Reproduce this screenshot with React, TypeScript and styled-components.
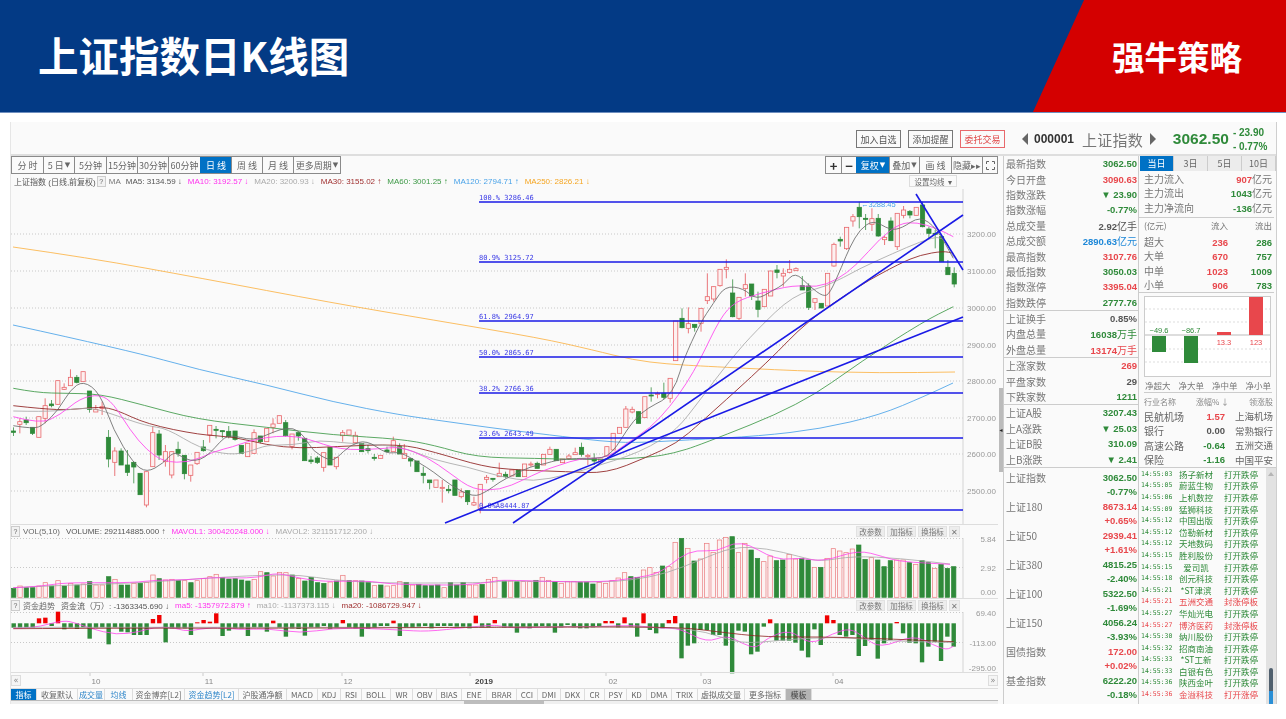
import React from 'react';
import styled, { createGlobalStyle } from 'styled-components';

const GREEN = '#2f8a3a';
const RED = '#e8474c';
const BLUE = '#0071c5';
const CJK = '"Noto Sans CJK SC", "Liberation Sans", sans-serif';
const LATIN = '"Liberation Sans", "Noto Sans CJK SC", sans-serif';

type Pt = [number, number];
// [isRed, bodyTop, bodyBottom, wickTop, wickBottom], in 3x crop units
type Candle = [number, number, number, number, number];

const candlesA: Candle[] = [
  [0,243,247,232,258],[1,215,223,205,250],[0,210,218,200,225],[0,232,250,232,255],[1,200,262,200,262],
  [1,167,205,145,220],[0,162,167,150,172],[1,92,163,92,165],[1,112,118,100,120],[1,82,107,58,107],
  [0,82,97,75,100],[1,65,95,65,95],[0,123,178,123,188],[1,178,186,165,186],[1,170,175,155,195],
  [0,262,327,240,352],[1,303,337,292,378],[0,303,345,295,345],[0,345,367,300,378],[0,337,351,335,400],
  [0,370,434,370,434],[1,365,465,365,472],[1,248,350,228,350],[0,252,315,240,330],[1,305,335,285,350],
  [1,305,375,305,385],[0,298,310,275,320],[0,316,371,316,388],[1,345,376,345,395],[1,307,341,307,345],
  [0,291,302,270,305],[1,226,255,226,278],[0,238,240,228,265],[0,242,244,242,265],[0,244,260,228,265],
  [0,243,268,243,272],[0,286,310,286,310],[1,280,320,280,320],[1,248,310,238,312],[0,258,275,258,280],
  [1,235,275,235,275],[1,222,232,205,250],[1,197,220,197,220],[0,218,257,210,260],[1,252,289,252,298],
  [0,248,258,248,272],[0,265,332,265,332],[0,330,335,318,342],[0,324,337,318,342],[1,308,352,308,365],
  [0,292,345,292,345],[1,322,350,322,358],[1,248,257,240,275],[1,240,255,240,255],[1,256,278,245,278],
  [0,280,305,280,305],[0,296,302,285,310],[0,322,325,312,332],[1,316,325,316,325],[0,300,305,290,308],
  [1,272,305,260,305],[0,290,312,280,312],
];
const candlesB: Candle[] = [
  [1,310,325,282,325],[0,326,333,326,350],[0,333,365,333,365],[0,370,376,350,400],[0,390,398,390,418],
  [1,390,412,390,412],[1,412,414,390,458],[0,418,422,405,430],[0,390,436,390,436],[1,426,440,415,445],
  [0,422,455,422,465],[1,458,465,440,468],[1,403,475,403,490],[1,382,388,375,400],[0,385,388,385,395],
  [1,370,380,338,380],[0,373,380,365,385],[1,360,378,360,378],[0,360,380,360,380],[1,342,380,342,380],
  [1,342,345,335,350],[0,340,355,335,355],[1,313,345,313,345],[1,298,313,290,313],[0,298,332,298,332],
  [1,327,338,327,338],[1,318,326,312,330],[1,308,314,293,314],[0,292,313,278,320],[1,316,320,312,345],
  [0,325,333,310,345],[1,327,333,327,333],[1,290,318,290,318],[1,250,300,250,300],[1,232,250,232,250],
  [1,177,232,168,232],[1,178,186,170,190],[0,185,220,185,220],[1,140,203,140,203],[0,135,137,112,155],
  [1,130,132,125,145],[0,130,142,98,148],[1,85,145,85,158],
];
const candlesC: Candle[] = [
  [1,393,512,393,512],[0,385,413,355,415],[1,401,415,352,430],[0,403,412,403,425],[1,355,400,355,425],
  [1,320,332,250,342],[1,290,327,290,335],[1,238,287,238,290],[1,232,238,208,265],[0,309,380,268,382],
  [1,322,385,322,390],[1,284,296,250,320],[0,282,318,282,330],[0,333,358,305,382],[1,298,350,298,350],
  [1,243,318,243,318],[0,240,247,225,265],[1,250,258,235,290],[1,238,247,210,250],[1,236,242,232,242],
  [0,287,300,258,300],[0,288,352,280,360],[1,326,337,326,360],[0,340,354,340,354],[1,250,348,250,348],
  [1,163,228,158,230],[0,148,153,140,170],[1,112,176,112,180],[1,80,93,72,110],[0,52,80,35,115],
  [0,85,87,72,120],[1,86,103,55,123],[0,85,138,72,140],[1,142,149,138,165],[0,93,152,82,152],
  [1,70,170,70,180],[1,60,76,48,85],[0,64,75,60,85],[1,52,76,52,76],[0,45,110,35,112],
  [0,117,130,110,145],[0,130,132,120,175],[0,140,215,140,215],[0,232,254,210,254],[0,250,282,232,292],
];

const z = (list: number[][], ox: number, oy: number): Pt[] => list.map(([x, y]) => [ox + x / 3, oy + y / 3]);

const smooth = (p: Pt[]) => {
  let d = `M${p[0][0].toFixed(1)} ${p[0][1].toFixed(1)}`;
  for (let i = 1; i < p.length - 1; i++) {
    const mx = (p[i][0] + p[i + 1][0]) / 2;
    const my = (p[i][1] + p[i + 1][1]) / 2;
    d += ` Q${p[i][0].toFixed(1)} ${p[i][1].toFixed(1)} ${mx.toFixed(1)} ${my.toFixed(1)}`;
  }
  const l = p[p.length - 1];
  return `${d} L${l[0].toFixed(1)} ${l[1].toFixed(1)}`;
};

const maLines: { color: string; pts: Pt[] }[] = [
  { color: '#fbb347', pts: [[13,247],[90,258],[200,278],[333,303],[433,320],[540,338],[593,350],[633,360],[667,364],[700,366],[800,371],[880,373],[955,372]] },
  { color: '#4aa3e8', pts: [[13,325],[127,350],[200,370],[267,385],[333,402],[400,415],[450,422],[500,429],[567,437],[600,441],[633,443],[687,440],[760,436],[820,429],[880,415],[925,396],[953,383]] },
  { color: '#3f9a48', pts: [
    ...z([[40,115],[110,128],[200,130],[300,132],[430,165],[590,208],[800,232],[1000,255],[1200,267]], 0, 350),
    ...z([[100,285],[230,322],[400,325],[600,330],[750,322],[820,310],[900,285]], 400, 350),
    ...z([[420,645],[610,510],[790,395],[880,350]], 660, 190),
  ] },
  { color: '#8f2020', pts: [
    ...z([[40,167],[130,177],[210,180],[300,170],[350,180],[440,222],[600,255],[700,260],[800,285],[900,295],[1000,290],[1200,282]], 0, 350),
    ...z([[100,305],[250,350],[350,360],[500,365],[620,370],[740,322],[830,280],[900,220]], 400, 350),
    ...z([[330,510],[440,395],[600,285],[720,220],[780,195],[850,183],[880,190]], 660, 190),
  ] },
  { color: '#a9a9a9', pts: [
    ...z([[40,183],[130,185],[200,180],[270,172],[330,190],[440,228],[500,235],[600,295],[690,315],[750,305],[800,285],[880,285],[960,270],[1040,280],[1200,287]], 0, 350),
    ...z([[100,330],[200,350],[300,380],[400,395],[500,375],[600,345],[680,320],[750,290],[830,240],[900,150]], 400, 350),
    ...z([[210,510],[290,420],[400,315],[500,290],[600,235],[700,190],[780,155],[850,135],[880,200]], 660, 190),
  ] },
  { color: '#ff44ee', pts: [
    ...z([[40,200],[120,222],[180,195],[240,145],[300,133],[340,160],[390,240],[440,300],[490,335],[570,338],[640,305],[700,290],[740,275],[800,262],[860,257],[920,265],[1020,300],[1140,297],[1200,290]], 0, 350),
    ...z([[80,320],[150,370],[220,420],[300,420],[370,390],[420,365],[480,345],[540,325],[620,325],[680,280],[750,235],[810,170],[860,100]], 400, 350),
    ...z([[120,510],[180,385],[225,335],[300,310],[400,285],[470,292],[530,270],[590,225],[660,145],[720,100],[770,97],[830,115],[880,140]], 660, 190),
  ] },
  { color: '#6a6a6a', pts: [
    ...z([[40,227],[100,237],[130,225],[175,180],[210,120],[250,92],[300,130],[340,240],[400,340],[440,368],[490,340],[520,305],[545,320],[570,332],[600,330],[630,310],[660,275],[685,255],[720,262],[760,270],[800,255],[840,238],[880,233],[910,255],[940,305],[990,332],[1010,325],[1050,285],[1100,270],[1160,312]], 0, 350),
    ...z([[0,305],[60,340],[100,365],[150,405],[220,442],[260,425],[300,395],[340,375],[390,350],[440,340],[470,330],[530,325],[590,325],[620,320],[650,290],[680,240],[720,190],[770,160],[800,145],[830,100]], 400, 350),
    ...z([[70,510],[120,400],[160,340],[195,288],[250,295],[290,330],[340,300],[370,285],[405,245],[450,290],[490,320],[510,310],[545,230],[570,170],[600,118],[640,90],[690,120],[725,115],[780,78],[830,115],[880,205]], 660, 190),
  ] },
];

const fibs: [number, string][] = [
  [202, '100.% 3286.46'], [262, '80.9% 3125.72'], [321, '61.8% 2964.97'], [357, '50.0% 2865.67'],
  [393, '38.2% 2766.36'], [438, '23.6% 2643.49'], [510, '0.0%A8444.87'],
];
const trends: [number, number, number, number][] = [[445, 523, 963, 317], [513, 523, 963, 215], [916, 194, 963, 270]];
const priceTicks: [number, string][] = [
  [234, '3200.00'], [271, '3100.00'], [308, '3000.00'], [345, '2900.00'],
  [381, '2800.00'], [418, '2700.00'], [454, '2600.00'], [491, '2500.00'],
];

// [isRed, top] in 3x crop units of the lower panels
const volA: [number, number][] = [
  [0,205],[1,198],[0,203],[0,203],[1,198],[1,188],[0,198],[1,182],[0,198],[1,190],[0,195],[1,192],[0,185],[1,195],[1,195],
  [0,170],[1,178],[0,195],[0,195],[1,190],[0,190],[1,187],[1,165],[0,176],[1,180],[1,178],[0,181],[1,182],[0,188],[1,182],
  [1,175],[1,170],[1,163],[0,173],[0,177],[0,176],[0,180],[0,183],[1,178],[1,155],[0,158],[1,168],[1,157],[1,158],[0,165],
  [1,175],[0,183],[0,172],[0,188],[0,190],[1,186],[0,183],[1,166],[0,182],[1,182],[0,183],[0,186],[1,197],[0,195],[1,198],
  [1,197],[1,185],[0,187],[1,195],[0,193],[0,197],[0,197],[0,195],[1,203],[0,188],[0,195],[0,187],[1,195],[1,195],[0,193],
  [1,178],[1,172],
];
const volB: [number, number][] = [
  [0,183],[1,183],[0,185],[1,185],[1,185],[0,181],[1,172],[1,181],[0,185],[1,190],[1,184],[1,184],[0,186],[0,186],[0,192],
  [1,187],[1,190],[1,182],[1,174],[1,158],[0,170],[0,172],[1,150],[1,143],[1,157],[0,138],[1,140],[1,67],[0,55],[1,85],
  [0,123],[1,117],[1,70],[1,97],[1,60],[1,52],[0,50],[1,98],[1,70],[0,90],[0,115],[1,125],[1,108],[0,122],[0,120],
  [1,103],[1,117],[0,115],[0,120],[1,142],[0,142],[1,115],[1,86],[1,93],[1,98],[1,87],[0,75],[0,118],[1,113],[0,120],
  [0,140],[0,122],[1,120],[1,120],[0,128],[1,133],[0,122],[0,128],[1,145],[0,133],[0,145],[0,140],
];
const flowA = [323,323,323,323,295,293,318,275,328,323,327,322,356,323,322,373,322,335,337,345,345,345,297,285,367,325,325,325,345,307,300,305,280,348,332,325,325,348,322,322,335,302,323,350,325,327,347,322,323,318,326,323,300,322,325,350,327,323,318,318,302,348,323,323,320,318,325,318,318,318,320,320,325,287,322,322,300];
const flowB = [323,322,338,322,325,320,318,322,338,322,315,322,325,325,322,318,303,303,322,292,320,350,280,330,340,325,300,288,415,377,370,330,330,345,345,377,460,332,335,403,395,320,298,362,362,362,368,392,412,328,375,286,300,345,350,345,408,378,360,416,370,360,306,340,368,370,427,380,365,423,350,380];

const STEP = 6.33;
const barXA = (i: number) => 13.7 + STEP * i;
const barXB = (i: number, n: number) => 953.7 - STEP * (n - 1 - i);

const volLines = [
  { color: '#a8a8a8', pts: [...z([[40,203],[200,195],[400,190],[640,173],[800,165],[900,165],[1000,180],[1150,190],[1480,188]], 0, 520), ...z([[0,182],[300,187],[400,180],[500,160],[600,120],[700,80],[800,85],[900,110],[960,125],[1060,108],[1200,115],[1350,132]], 500, 520)] },
  { color: '#ff44ee', pts: [...z([[40,203],[110,200],[180,190],[240,188],[400,188],[470,180],[560,180],[640,172],[700,175],[780,172],[830,158],[900,175],[970,185],[1100,182],[1170,192],[1280,195],[1400,195],[1480,185]], 0, 520), ...z([[0,180],[100,183],[300,187],[400,175],[480,160],[540,110],[590,90],[650,95],[700,68],[750,75],[800,105],[850,120],[900,113],[970,125],[1075,90],[1150,110],[1200,125],[1350,133]], 500, 520)] },
];
const flowLines = [
  { color: '#ff44ee', pts: [...z([[40,325],[100,325],[190,300],[230,310],[270,325],[350,345],[420,335],[460,322],[520,322],[560,335],[640,320],[720,330],[800,325],[900,340],[1000,325],[1100,325],[1200,330],[1280,335],[1400,322],[1480,315]], 0, 520), ...z([[0,318],[50,325],[150,320],[300,320],[400,315],[480,325],[540,325],[620,368],[680,345],[730,372],[770,385],[800,355],[870,328],[930,375],[1000,340],[1050,325],[1090,350],[1140,385],[1240,345],[1300,375],[1340,390],[1361,378]], 500, 520)] },
  { color: '#a8a8a8', pts: [...z([[40,322],[400,322],[800,322],[1480,322]], 0, 520), ...z([[0,320],[500,320],[620,335],[720,372],[850,360],[1000,350],[1150,362],[1361,368]], 500, 520)] },
  { color: '#8f2020', pts: [...z([[40,326],[400,324],[800,325],[1480,322]], 0, 520), ...z([[0,322],[530,320],[650,335],[800,352],[1000,350],[1361,365]], 500, 520)] },
];

const GlobalStyle = createGlobalStyle`
  html, body { margin: 0; padding: 0; background: #fff; }
  * { box-sizing: border-box; }
`;

const Page = styled.div`
  width: 1286px;
  height: 719px;
  overflow: hidden;
  font-family: ${CJK};
`;

const Banner = styled.header`
  height: 113px;
  background: #033a85;
  display: flex;
  align-items: center;
  border-bottom: 1px solid #6f8fbf;
`;

const Title = styled.h1`
  margin: 0 0 0 38px;
  font-size: 40.5px;
  line-height: 1;
  font-weight: 700;
  color: #fff;
  position: relative;
  top: -1px;
`;

const Brand = styled.div`
  margin-left: auto;
  width: 253px;
  height: 100%;
  background: #d40000;
  clip-path: polygon(51px 0, 100% 0, 100% 100%, 0 100%);
  color: #fff;
  font-size: 32.5px;
  font-weight: 700;
  display: flex;
  align-items: center;
  padding: 0 0 2px 79px;
`;

const Win = styled.div`
  margin: 9px 0 0 10px;
  width: 1267px;
  height: 582px;
  background: #fafafa;
  border-left: 1px solid #e6e6e6;
  border-right: 1px solid #cfcfcf;
  filter: blur(0.35px);
`;

const TopBar = styled.div`
  height: 34px;
  border-bottom: 2px solid #dedede;
  display: flex;
  align-items: center;
  padding: 2px 0 0 845px;
`;

const ActionBtn = styled.button<{ $danger?: boolean }>`
  width: 45px;
  height: 18px;
  margin-right: 7px;
  padding: 0;
  background: #fafafa;
  border: 1px solid ${p => (p.$danger ? '#e8696c' : '#777')};
  color: ${p => (p.$danger ? '#e04848' : '#555')};
  font: 9px ${CJK};
`;

const Triangle = styled.span<{ $dir: 'left' | 'right' }>`
  width: 0;
  height: 0;
  flex: none;
  border-style: solid;
  border-color: transparent;
  border-width: 6px 0 6px 0;
  ${p => (p.$dir === 'left' ? 'border-right: 6px solid #666; margin-left: 10px;' : 'border-left: 6px solid #666;')}
`;

const Code = styled.span`
  margin: 0 8px 0 6px;
  font: 700 12px ${LATIN};
  color: #333;
`;

const StockName = styled.span`
  font-size: 15px;
  letter-spacing: 0.2px;
  color: #777;
  margin-right: 7px;
`;

const BigPrice = styled.span`
  margin: 0 4px 0 17px;
  font: 700 15.5px ${LATIN};
  color: ${GREEN};
`;

const Changes = styled.div`
  display: flex;
  flex-direction: column;
  gap: 3px;
  font: 700 10px/11px ${LATIN};
  color: ${GREEN};
`;

const Body = styled.div`
  display: flex;
  height: 548px;
`;

const ChartCol = styled.div`
  position: relative;
  width: 992px;
  flex: none;
  display: flex;
  flex-direction: column;
`;

const ToolRow = styled.div`
  height: 18px;
  padding-right: 5px;
  display: flex;
  justify-content: space-between;
`;

const BtnGroup = styled.div`
  display: flex;
  border: 1px solid #8a8a8a;
`;

const ToolBtn = styled.div<{ $w: number; $on?: boolean; $big?: boolean }>`
  width: ${p => p.$w}px;
  display: flex;
  align-items: center;
  justify-content: center;
  background: ${p => (p.$on ? BLUE : '#fafafa')};
  color: ${p => (p.$on ? '#fff' : p.$big ? '#333' : '#666')};
  border-left: 1px solid ${p => (p.$on ? BLUE : '#8a8a8a')};
  font-size: ${p => (p.$big ? 13 : 9)}px;
  font-weight: ${p => (p.$big ? 700 : 400)};
  white-space: nowrap;
  &:first-child { border-left: 0; }
`;

const Caret = styled.span`
  font: 7px "DejaVu Sans", sans-serif;
  margin-left: 1px;
`;

const Legend = styled.div`
  height: 15px;
  padding: 0 5px 0 3px;
  display: flex;
  align-items: center;
  font: 8px ${LATIN};
  white-space: nowrap;
`;

const LegendItem = styled.span<{ $c: string }>`
  color: ${p => p.$c};
  margin-right: 6px;
`;

const Help = styled.span`
  width: 9px;
  height: 11px;
  margin: 0 3px 0 0;
  border: 1px solid #ccc;
  background: #f2f2f2;
  color: #666;
  font-size: 7px;
  display: inline-flex;
  align-items: center;
  justify-content: center;
  flex: none;
`;

const MaSetting = styled.span`
  position: absolute;
  top: 19px;
  left: 898px;
  width: 48px;
  height: 12px;
  border: 1px solid #ddd;
  background: #fafafa;
  color: #666;
  font-size: 7.5px;
  display: flex;
  align-items: center;
  justify-content: center;
  gap: 3px;
`;

const ChartSvg = styled.svg<{ $h: number }>`
  display: block;
  width: 992px;
  height: ${p => p.$h}px;
  flex: none;
  overflow: visible;
`;

const PanelHead = styled(Legend)`
  height: 14px;
  border-top: 1px solid #ddd;
  margin-right: 5px;
  padding: 0;
`;

const PanelTools = styled.div`
  margin-left: auto;
  display: flex;
  gap: 2px;
  padding-right: 38px;
`;

const PanelTool = styled.span<{ $w?: number }>`
  width: ${p => p.$w || 29}px;
  height: 11px;
  background: #ededed;
  border: 1px solid #e2e2e2;
  color: #777;
  font: 7.5px ${CJK};
  display: flex;
  align-items: center;
  justify-content: center;
`;

const DateAxis = styled.div`
  height: 17px;
  margin-right: 5px;
  border-top: 1px solid #ddd;
  border-bottom: 1px solid #ddd;
  display: flex;
  align-items: center;
  justify-content: space-between;
`;

const Pager = styled.span`
  width: 10px;
  height: 11px;
  border: 1px solid #ddd;
  background: #f5f5f5;
  color: #888;
  font: 8px/9px "DejaVu Sans", sans-serif;
  text-align: center;
`;

const TabBar = styled.div`
  height: 12px;
  margin-right: 5px;
  display: flex;
  border-bottom: 1px solid #bbb;
`;

const BottomTab = styled.span<{ $w: number; $mode?: 'active' | 'link' | 'muted' }>`
  width: ${p => p.$w}px;
  flex: none;
  display: flex;
  align-items: center;
  justify-content: center;
  border-right: 1px solid #ddd;
  background: ${p => (p.$mode === 'active' ? BLUE : p.$mode === 'muted' ? '#b4b4b4' : 'transparent')};
  color: ${p => (p.$mode === 'active' ? '#fff' : p.$mode === 'link' ? '#2f86c9' : p.$mode === 'muted' ? '#444' : '#666')};
  font: 8px ${CJK};
  white-space: nowrap;
`;

const HScroll = styled.div`
  height: 3px;
  margin-right: 5px;
  background: #f0f0f0;
`;

const HThumb = styled.div`
  width: 80px;
  height: 3px;
  margin-left: 453px;
  background: #bdbdbd;
`;

const SideHandle = styled.span`
  position: absolute;
  left: 988px;
  top: 232px;
  width: 4px;
  height: 84px;
  background: #bbb;
  color: #222;
  font: 6px/84px "DejaVu Sans", sans-serif;
  text-align: center;
`;

const StatCol = styled.div`
  width: 136px;
  flex: none;
  border-left: 1px solid #ccc;
  border-right: 1px solid #ccc;
`;

const StatGroup = styled.div`
  border-bottom: 1px solid #ccc;
`;

const StatRow = styled.div<{ $h?: number }>`
  height: ${p => p.$h || 15.4}px;
  padding: 0 1px 0 2px;
  display: flex;
  align-items: center;
  justify-content: space-between;
  white-space: nowrap;
`;

const IndexList = styled.div`
  padding-top: 2px;
`;

const Label = styled.span`
  font-size: 10px;
  color: #777;
`;

const Num = styled.span<{ $c?: string }>`
  font: 700 9.5px ${LATIN};
  color: ${p => p.$c || '#555'};
`;

const Unit = styled.span<{ $c?: string }>`
  font: 400 10px ${CJK};
  color: ${p => p.$c || 'inherit'};
`;

const FlowCol = styled.div`
  flex: 1;
  min-width: 0;
  display: flex;
  flex-direction: column;
`;

const DayTabs = styled.div`
  display: flex;
  height: 15px;
  margin-left: 1px;
  flex: none;
`;

const DayTab = styled.span<{ $on?: boolean }>`
  flex: 1;
  display: flex;
  align-items: center;
  justify-content: center;
  font-size: 9px;
  background: ${p => (p.$on ? BLUE : '#ececec')};
  color: ${p => (p.$on ? '#fff' : '#666')};
  border-right: 1px solid #ccc;
`;

const FlowBlock = styled.div`
  padding: 0 2px 2px 5px;
  border-bottom: 1px solid #ccc;
  margin-right: 2px;
  flex: none;
`;

const FlowRow = styled.div<{ $h?: number }>`
  height: ${p => p.$h || 14.5}px;
  display: flex;
  align-items: center;
  justify-content: space-between;
  white-space: nowrap;
`;

const SmallHead = styled.span<{ $w?: number }>`
  width: ${p => p.$w || 40}px;
  font-size: 8.5px;
  color: #777;
  text-align: right;
  &:first-child { text-align: left; }
`;

const Cell = styled.span<{ $w: number }>`
  width: ${p => p.$w}px;
  text-align: right;
  &:first-child { text-align: left; }
`;

const MiniBox = styled.svg`
  display: block;
  width: 127px;
  height: 81px;
  margin: 3.5px 0 0 5px;
  flex: none;
`;

const NetLabels = styled.div`
  height: 16px;
  margin: 0 4px 0 5px;
  padding: 0 1px;
  display: flex;
  align-items: center;
  justify-content: space-between;
  border-bottom: 1px solid #ccc;
  font-size: 8.5px;
  color: #777;
  flex: none;
`;

const IndustryBlock = styled.div`
  padding: 0 3px 0 5px;
  height: 75px;
  border-bottom: 1px solid #ccc;
  flex: none;
`;

const IndustryHead = styled.div`
  height: 16px;
  display: flex;
  align-items: center;
  justify-content: space-between;
  font-size: 8px;
  color: #888;
`;

const Name = styled.span`
  width: 44px;
  font-size: 10px;
  color: #666;
`;

const Rate = styled(Num)`
  width: 34px;
  text-align: right;
`;

const Lead = styled.span`
  width: 45px;
  text-align: right;
  font-size: 9.5px;
  color: #666;
`;

const TapeArea = styled.div`
  flex: 1;
  min-height: 0;
  display: flex;
  overflow: hidden;
`;

const Tape = styled.div`
  flex: 1;
  padding: 0 0 0 2px;
  overflow: hidden;
`;

const TapeRow = styled.div<{ $c: string }>`
  height: 11.6px;
  display: flex;
  align-items: center;
  color: ${p => p.$c};
  font-size: 8.5px;
  white-space: nowrap;
`;

const TapeTime = styled.span`
  width: 37px;
  font: 6.5px "DejaVu Sans Mono", monospace;
  flex: none;
`;

const TapeName = styled.span`
  width: 36px;
  flex: none;
  text-align: center;
  margin-right: 10px;
`;

const VBar = styled.div`
  position: relative;
  width: 10px;
  flex: none;
  background: #e2e2e2;
`;

const VArrow = styled.span`
  display: block;
  margin: 4px auto 0;
  width: 0;
  height: 0;
  border: 3px solid transparent;
  border-top: 0;
  border-bottom: 4px solid #b5b5b5;
`;

const VThumb = styled.span`
  position: absolute;
  left: 3px;
  top: 200px;
  width: 4px;
  height: 50px;
  border-radius: 2px;
  background: linear-gradient(#50606e 0 45%, #2a8fd6 45%);
`;

const periods: [React.ReactNode, number, boolean?][] = [
  ['分 时', 31], [<>5 日<Caret>▼</Caret></>, 31], ['5分钟', 32], ['15分钟', 31], ['30分钟', 31], ['60分钟', 32],
  ['日 线', 31, true], ['周 线', 31], ['月 线', 31], [<>更多周期<Caret>▼</Caret></>, 47],
];
const tools: [React.ReactNode, number, boolean?][] = [
  [<>复权 <Caret>▼</Caret></>, 33, true], [<>叠加<Caret>▼</Caret></>, 30], ['画 线', 32], ['隐藏▸▸', 31],
];

const statGroups: [string, string, string?][][] = [
  [
    ['最新指数', '3062.50', GREEN], ['今日开盘', '3090.63', RED], ['指数涨跌', '▼ 23.90', GREEN], ['指数涨幅', '-0.77%', GREEN],
    ['总成交量', '2.92|亿手'], ['总成交额', '2890.63|亿元', '#1e88d8'], ['最高指数', '3107.76', RED], ['最低指数', '3050.03', GREEN],
    ['指数涨停', '3395.04', RED], ['指数跌停', '2777.76', GREEN],
  ],
  [['上证换手', '0.85%'], ['内盘总量', '16038|万手', GREEN], ['外盘总量', '13174|万手', RED]],
  [['上涨家数', '269', RED], ['平盘家数', '29'], ['下跌家数', '1211', GREEN]],
  [['上证A股', '3207.43', GREEN], ['上A涨跌', '▼ 25.03', GREEN], ['上证B股', '310.09', GREEN], ['上B涨跌', '▼ 2.41', GREEN]],
];

const indexRows: [string, string, string][] = [
  ['上证指数', '3062.50', '-0.77%'], ['上证180', '8673.14', '+0.65%'], ['上证50', '2939.41', '+1.61%'], ['上证380', '4815.25', '-2.40%'],
  ['上证100', '5322.50', '-1.69%'], ['上证150', '4056.24', '-3.93%'], ['国债指数', '172.00', '+0.02%'], ['基金指数', '6222.20', '-0.18%'],
];

const tape: [string, string, string?][] = [
  ['14:55:03', '扬子新材'], ['14:55:05', '蔚蓝生物'], ['14:55:06', '上机数控'], ['14:55:09', '猛狮科技'], ['14:55:12', '中国出版'],
  ['14:55:12', '岱勒新材'], ['14:55:12', '天地数码'], ['14:55:15', '胜利股份'], ['14:55:15', '爱司凯'], ['14:55:18', '创元科技'],
  ['14:55:21', '*ST津滨'], ['14:55:21', '五洲交通', '封涨停板'], ['14:55:27', '华灿光电'], ['14:55:27', '博济医药', '封涨停板'], ['14:55:30', '纳川股份'],
  ['14:55:32', '招商南油'], ['14:55:33', '*ST工新'], ['14:55:33', '白银有色'], ['14:55:36', '陕西金叶'], ['14:55:36', '金溢科技', '打开涨停'],
];

const bottomTabs: [string, number, ('active' | 'link' | 'muted')?][] = [
  ['指标', 26, 'active'], ['收复默认', 41], ['成交量', 27, 'link'], ['均线', 28, 'link'], ['资金博弈[L2]', 52], ['资金趋势[L2]', 54, 'link'], ['沪股通净额', 48],
  ['MACD', 31], ['KDJ', 23], ['RSI', 21], ['BOLL', 29], ['WR', 22], ['OBV', 24], ['BIAS', 25], ['ENE', 25], ['BRAR', 30], ['CCI', 21], ['DMI', 23],
  ['DKX', 24], ['CR', 20], ['PSY', 22], ['KD', 20], ['DMA', 25], ['TRIX', 26], ['虚拟成交量', 47], ['更多指标', 41], ['模板', 26, 'muted'],
];

const CandleMark = ({ c, x, oy }: { c: Candle; x: number; oy: number }) => {
  const [red, top, bot, hi, lo] = c;
  const stroke = red ? '#e8686c' : GREEN;
  const y = oy + top / 3;
  const h = Math.max((bot - top) / 3, 1);
  return (
    <g>
      <line x1={x} x2={x} y1={oy + hi / 3} y2={oy + lo / 3} stroke={stroke} strokeWidth={0.9} opacity={red ? 1 : 0.85} />
      <rect x={x - 2.1} y={y} width={4.2} height={h} fill={red ? '#fdf0f0' : GREEN} stroke={stroke} strokeWidth={0.8} />
    </g>
  );
};

const Dotted = ({ y, x2 = 963 }: { y: number; x2?: number }) => (
  <line x1={11} x2={x2} y1={y} y2={y} stroke="#c8c8c8" strokeWidth={1} strokeDasharray="1 2" />
);

const AxisText = ({ y, children }: { y: number; children: string }) => (
  <text x={996} y={y + 3} textAnchor="end" fontSize={8} fontFamily={LATIN} fill="#999">{children}</text>
);

const PriceChart = () => (
  <ChartSvg $h={335} viewBox="11 189 992 335">
    {priceTicks.map(([y]) => <Dotted key={y} y={y} />)}
    <line x1={963} x2={963} y1={189} y2={524} stroke="#d4d4d4" />
    {candlesA.map((c, i) => <CandleMark key={i} c={c} x={13.5 + STEP * i} oy={350} />)}
    {candlesB.map((c, i) => <CandleMark key={i} c={c} x={404.3 + STEP * i} oy={350} />)}
    {candlesC.map((c, i) => <CandleMark key={i} c={c} x={675.7 + STEP * i} oy={190} />)}
    {maLines.map(l => <path key={l.color} d={smooth(l.pts)} fill="none" stroke={l.color} strokeWidth={0.85} />)}
    {fibs.map(([y, t]) => (
      <g key={y}>
        <text x={479} y={y - 2} fontSize={7} fontFamily='"DejaVu Sans Mono", monospace' fill="#3a3ae6">{t}</text>
        <line x1={479} x2={963} y1={y} y2={y} stroke="#1a1ae6" strokeWidth={1.6} />
      </g>
    ))}
    {trends.map(([a, b, c, d]) => <line key={a} x1={a} y1={b} x2={c} y2={d} stroke="#1a1ae6" strokeWidth={1.6} />)}
    <text x={861} y={207} fontSize={7.5} fontFamily={LATIN} fill="#4aa3e8">←3288.45</text>
    {priceTicks.map(([y, t]) => <AxisText key={y} y={y}>{t}</AxisText>)}
  </ChartSvg>
);

const VolumeBar = ({ v, x }: { v: [number, number]; x: number }) => {
  const y = 520 + v[1] / 3;
  return (
    <rect x={x - 2.2} y={y} width={4.4} height={597.3 - y} fill={v[0] ? '#fdf2f2' : GREEN} stroke={v[0] ? '#ea7a7d' : GREEN} strokeWidth={0.7} />
  );
};

const VolumeChart = () => (
  <ChartSvg $h={60} viewBox="11 538 992 60">
    <Dotted y={538.5} />
    <Dotted y={567.5} />
    <line x1={963} x2={963} y1={538} y2={598} stroke="#d4d4d4" />
    {volA.map((v, i) => <VolumeBar key={i} v={v} x={barXA(i)} />)}
    {volB.map((v, i) => <VolumeBar key={i} v={v} x={barXB(i, volB.length)} />)}
    {volLines.map(l => <path key={l.color} d={smooth(l.pts)} fill="none" stroke={l.color} strokeWidth={0.8} />)}
    <AxisText y={538.5}>5.84</AxisText>
    <AxisText y={568}>2.92</AxisText>
    <AxisText y={592}>0.00</AxisText>
  </ChartSvg>
);

const FlowBar = ({ top, x }: { top: number; x: number }) => {
  const zero = 623.3;
  const y = 520 + top / 3;
  const up = y < zero;
  return <rect x={x - 2.2} y={up ? y : zero} width={4.4} height={Math.abs(y - zero)} fill={up ? '#f00000' : GREEN} />;
};

const FlowChart = () => (
  <ChartSvg $h={60} viewBox="11 612 992 60">
    <Dotted y={612.5} />
    <Dotted y={642.5} />
    <line x1={963} x2={963} y1={612} y2={672} stroke="#d4d4d4" />
    {flowA.map((t, i) => <FlowBar key={i} top={t} x={barXA(i)} />)}
    {flowB.map((t, i) => <FlowBar key={i} top={t} x={barXB(i, flowB.length)} />)}
    {flowLines.map(l => <path key={l.color} d={smooth(l.pts)} fill="none" stroke={l.color} strokeWidth={0.8} />)}
    <AxisText y={613}>69.40</AxisText>
    <AxisText y={643}>-113.00</AxisText>
    <AxisText y={668}>-295.00</AxisText>
  </ChartSvg>
);

const dateMarks: [number, string, number][] = [
  [90, '10', 96], [203, '11', 209], [342, '12', 348], [470, '2019', 484], [606, '02', 613], [701, '03', 707], [833, '04', 839],
];

const DateSvg = styled(ChartSvg)`
  width: 966px;
`;

const DateTicks = () => (
  <DateSvg $h={15} viewBox="22 673 966 15">
    {dateMarks.map(([x, t, tx]) => (
      <g key={t}>
        <line x1={x} x2={x} y1={673} y2={676} stroke="#ccc" />
        <text x={tx} y={684} textAnchor="middle" fontSize={8} fontWeight={t === '2019' ? 700 : 400} fontFamily={LATIN} fill={t === '2019' ? '#444' : '#888'}>{t}</text>
      </g>
    ))}
  </DateSvg>
);

const MiniChart = () => (
  <MiniBox viewBox="1144 296 127 81">
    <rect x={1144.5} y={296.5} width={126} height={80} fill="#fff" stroke="#ccc" />
    {[309, 322, 349, 362].map(y => <line key={y} x1={1145} x2={1270} y1={y} y2={y} stroke="#ddd" strokeDasharray="2 2" />)}
    <line x1={1145} x2={1270} y1={335} y2={335} stroke="#bbb" />
    <rect x={1152} y={336} width={14} height={16} fill={GREEN} />
    <rect x={1184} y={336} width={14} height={27} fill={GREEN} />
    <rect x={1217} y={332} width={14} height={3} fill={RED} />
    <rect x={1249} y={297} width={14} height={38} fill={RED} />
    <g fontSize={7.5} fontFamily={LATIN} textAnchor="middle">
      <text x={1159} y={333} fill={GREEN}>−49.6</text>
      <text x={1191} y={333} fill={GREEN}>−86.7</text>
      <text x={1224} y={345} fill={RED}>13.3</text>
      <text x={1256} y={345} fill={RED}>123</text>
    </g>
  </MiniBox>
);

const FullIcon = () => (
  <svg width="9" height="9" viewBox="0 0 9 9" fill="none" stroke="#666" strokeWidth="1">
    <path d="M0.5 3V0.5H3M6 0.5H8.5V3M8.5 6V8.5H6M3 8.5H0.5V6" />
  </svg>
);

const pctColor = (s: string) => (s.startsWith('+') ? RED : GREEN);

const PanelButtons = () => (
  <PanelTools>
    <PanelTool>改参数</PanelTool>
    <PanelTool>加指标</PanelTool>
    <PanelTool>换指标</PanelTool>
    <PanelTool $w={11}>✕</PanelTool>
  </PanelTools>
);

export default function App() {
  return (
    <Page>
      <GlobalStyle />
      <Banner>
        <Title>上证指数日K线图</Title>
        <Brand>强牛策略</Brand>
      </Banner>
      <Win>
        <TopBar>
          <ActionBtn>加入自选</ActionBtn>
          <ActionBtn>添加提醒</ActionBtn>
          <ActionBtn $danger>委托交易</ActionBtn>
          <Triangle $dir="left" />
          <Code>000001</Code>
          <StockName>上证指数</StockName>
          <Triangle $dir="right" />
          <BigPrice>3062.50</BigPrice>
          <Changes><span>- 23.90</span><span>- 0.77%</span></Changes>
        </TopBar>
        <Body>
          <ChartCol>
            <ToolRow>
              <BtnGroup>
                {periods.map(([t, w, on], i) => <ToolBtn key={i} $w={w} $on={on}>{t}</ToolBtn>)}
              </BtnGroup>
              <BtnGroup>
                <ToolBtn $w={15} $big>+</ToolBtn>
                <ToolBtn $w={15} $big>−</ToolBtn>
                {tools.map(([t, w, on], i) => <ToolBtn key={i} $w={w} $on={on}>{t}</ToolBtn>)}
                <ToolBtn $w={15}><FullIcon /></ToolBtn>
              </BtnGroup>
            </ToolRow>
            <Legend>
              <LegendItem $c="#555" style={{ marginRight: 1 }}>上证指数 (日线,前复权)</LegendItem>
              <Help>?</Help>
              <LegendItem $c="#777" style={{ marginRight: 5 }}>MA</LegendItem>
              <LegendItem $c="#555">MA5: 3134.59 ↓</LegendItem>
              <LegendItem $c="#ff33ee">MA10: 3192.57 ↓</LegendItem>
              <LegendItem $c="#aaa">MA20: 3200.93 ↓</LegendItem>
              <LegendItem $c="#a03030">MA30: 3155.02 ↑</LegendItem>
              <LegendItem $c="#3f9a48">MA60: 3001.25 ↑</LegendItem>
              <LegendItem $c="#4aa3e8">MA120: 2794.71 ↑</LegendItem>
              <LegendItem $c="#f5a623">MA250: 2826.21 ↓</LegendItem>
            </Legend>
            <MaSetting>设置均线 <span>▾</span></MaSetting>
            <PriceChart />
            <PanelHead>
              <Help>?</Help>
              <LegendItem $c="#666">VOL(5,10)</LegendItem>
              <LegendItem $c="#555">VOLUME: 292114885.000 ↑</LegendItem>
              <LegendItem $c="#ff33ee">MAVOL1: 300420248.000 ↓</LegendItem>
              <LegendItem $c="#aaa">MAVOL2: 321151712.200 ↓</LegendItem>
              <PanelButtons />
            </PanelHead>
            <VolumeChart />
            <PanelHead>
              <Help>?</Help>
              <LegendItem $c="#666">资金趋势</LegendItem>
              <LegendItem $c="#555">资金流（万）: -1363345.690 ↓</LegendItem>
              <LegendItem $c="#ff33ee">ma5: -1357972.879 ↑</LegendItem>
              <LegendItem $c="#aaa">ma10: -1137373.115 ↓</LegendItem>
              <LegendItem $c="#a03030">ma20: -1086729.947 ↓</LegendItem>
              <PanelButtons />
            </PanelHead>
            <FlowChart />
            <DateAxis>
              <Pager>«</Pager>
              <DateTicks />
              <Pager>»</Pager>
            </DateAxis>
            <TabBar>
              {bottomTabs.map(([t, w, m]) => <BottomTab key={t} $w={w} $mode={m}>{t}</BottomTab>)}
            </TabBar>
            <HScroll><HThumb /></HScroll>
            <SideHandle>◂</SideHandle>
          </ChartCol>
          <StatCol>
            {statGroups.map((g, i) => (
              <StatGroup key={i}>
                {g.map(([l, v, c]) => {
                  const [num, unit] = v.split('|');
                  return (
                    <StatRow key={l}>
                      <Label>{l}</Label>
                      <Num $c={c}>{num}{unit && <Unit>{unit}</Unit>}</Num>
                    </StatRow>
                  );
                })}
              </StatGroup>
            ))}
            <IndexList>
              {indexRows.map(([l, v, p]) => (
                <React.Fragment key={l}>
                  <StatRow $h={14.5}>
                    <Label>{l}</Label>
                    <Num $c={pctColor(p)}>{v}</Num>
                  </StatRow>
                  <StatRow $h={14.5}>
                    <span />
                    <Num $c={pctColor(p)}>{p}</Num>
                  </StatRow>
                </React.Fragment>
              ))}
            </IndexList>
          </StatCol>
          <FlowCol>
            <DayTabs>
              <DayTab $on>当日</DayTab><DayTab>3日</DayTab><DayTab>5日</DayTab><DayTab>10日</DayTab>
            </DayTabs>
            <FlowBlock>
              <FlowRow><Label>主力流入</Label><Num $c={RED}>907<Unit $c="#777">亿元</Unit></Num></FlowRow>
              <FlowRow><Label>主力流出</Label><Num $c={GREEN}>1043<Unit $c="#777">亿元</Unit></Num></FlowRow>
              <FlowRow><Label>主力净流向</Label><Num $c={GREEN}>-136<Unit $c="#777">亿元</Unit></Num></FlowRow>
            </FlowBlock>
            <FlowBlock>
              <FlowRow $h={14}>
                <SmallHead>(亿元)</SmallHead><SmallHead>流入</SmallHead><SmallHead>流出</SmallHead>
              </FlowRow>
              {[['超大', '236', '286'], ['大单', '670', '757'], ['中单', '1023', '1009'], ['小单', '906', '783']].map(([a, b, c]) => (
                <FlowRow key={a}>
                  <Cell $w={40}><Label>{a}</Label></Cell>
                  <Cell $w={40}><Num $c={RED}>{b}</Num></Cell>
                  <Cell $w={40}><Num $c={GREEN}>{c}</Num></Cell>
                </FlowRow>
              ))}
            </FlowBlock>
            <MiniChart />
            <NetLabels><span>净超大</span><span>净大单</span><span>净中单</span><span>净小单</span></NetLabels>
            <IndustryBlock>
              <IndustryHead><span>行业名称</span><span>涨幅% ↓</span><span>领涨股</span></IndustryHead>
              {[['民航机场', '1.57', '上海机场', RED], ['银行', '0.00', '常熟银行', '#555'], ['高速公路', '-0.64', '五洲交通', GREEN], ['保险', '-1.16', '中国平安', GREEN]].map(([a, b, c, d]) => (
                <FlowRow key={a}>
                  <Name>{a}</Name><Rate $c={d}>{b}</Rate><Lead>{c}</Lead>
                </FlowRow>
              ))}
            </IndustryBlock>
            <TapeArea>
              <Tape>
                {tape.map(([t, n, s], i) => (
                  <TapeRow key={i} $c={s ? RED : GREEN}>
                    <TapeTime>{t}</TapeTime>
                    <TapeName>{n}</TapeName>
                    <span>{s || '打开跌停'}</span>
                  </TapeRow>
                ))}
              </Tape>
              <VBar><VArrow /><VThumb /></VBar>
            </TapeArea>
          </FlowCol>
        </Body>
      </Win>
    </Page>
  );
}
